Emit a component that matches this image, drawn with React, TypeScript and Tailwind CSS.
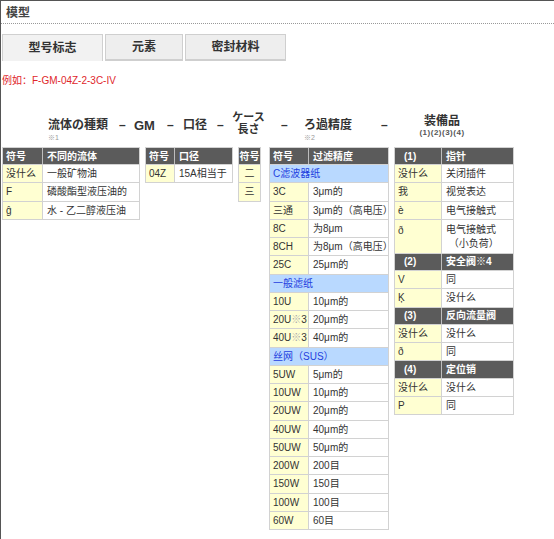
import React from 'react'

type Row = {
    k: string
    v?: string
    kind?: 'head' | 'section' | 'row'
    tall?: boolean
}

const fluid: Row[] = [
    { k: '符号', v: '不同的流体', kind: 'head' },
    { k: '没什么', v: '一般矿物油' },
    { k: 'F', v: '磷酸酯型液压油的' },
    { k: 'ĝ', v: '水 - 乙二醇液压油' },
]

const bore: Row[] = [
    { k: '符号', v: '口径', kind: 'head' },
    { k: '04Z', v: '15A相当于' },
]

const caseLen: Row[] = [
    { k: '符号', kind: 'head' },
    { k: '二' },
    { k: '三' },
]

const filter: Row[] = [
    { k: '符号', v: '过滤精度', kind: 'head' },
    { k: 'C滤波器纸', kind: 'section' },
    { k: '3C', v: '3μm的' },
    { k: '三通', v: '3μm的（高电压）' },
    { k: '8C', v: '为8μm' },
    { k: '8CH', v: '为8μm（高电压）' },
    { k: '25C', v: '25μm的' },
    { k: '一般滤纸', kind: 'section' },
    { k: '10U', v: '10μm的' },
    { k: '20U※3', v: '20μm的' },
    { k: '40U※3', v: '40μm的' },
    { k: '丝网（SUS）', kind: 'section' },
    { k: '5UW', v: '5μm的' },
    { k: '10UW', v: '10μm的' },
    { k: '20UW', v: '20μm的' },
    { k: '40UW', v: '40μm的' },
    { k: '50UW', v: '50μm的' },
    { k: '200W', v: '200目' },
    { k: '150W', v: '150目' },
    { k: '100W', v: '100目' },
    { k: '60W', v: '60目' },
]

const options: Row[] = [
    { k: '(1)', v: '指针', kind: 'head' },
    { k: '没什么', v: '关闭插件' },
    { k: '我', v: '视觉表达' },
    { k: 'è', v: '电气接触式' },
    { k: 'ð', v: '电气接触式\n （小负荷）', tall: true },
    { k: '(2)', v: '安全阀※4', kind: 'head' },
    { k: 'V', v: '同' },
    { k: 'Ķ', v: '没什么' },
    { k: '(3)', v: '反向流量阀', kind: 'head' },
    { k: '没什么', v: '没什么' },
    { k: 'ð', v: '同' },
    { k: '(4)', v: '定位销', kind: 'head' },
    { k: '没什么', v: '没什么' },
    { k: 'P', v: '同' },
]

function SpecTable({ rows, keyW, valW, padHead }: { rows: Row[]; keyW: string; valW?: string; padHead?: string }) {
    return (
        <div className="flex flex-col border border-[#d2d2d2] bg-white">
            {rows.map((r, i) => {
                const top = i > 0 ? 'border-t border-[#d2d2d2]' : ''
                if (r.kind === 'section') {
                    return (
                        <div key={i} className={`h-[18.25px] flex items-center px-[3px] bg-[#b9d9ff] text-[#1f3fe0] whitespace-nowrap ${top}`}>
                            {r.k}
                        </div>
                    )
                }
                if (r.kind === 'head') {
                    return (
                        <div key={i} className={`flex ${i === 0 ? 'h-[16px]' : 'h-[17.25px] border-t border-[#d2d2d2]'} bg-[#5b5b5b] text-white font-bold whitespace-nowrap`}>
                            <div className={`${keyW} shrink-0 flex items-center ${padHead ?? 'pl-[3px]'} ${valW ? 'border-r border-[#bdbdbd]' : ''}`}>
                                {r.k}
                            </div>
                            {valW && <div className={`${valW} flex items-center pl-[4px]`}>{r.v}</div>}
                        </div>
                    )
                }
                return (
                    <div key={i} className={`flex ${r.tall ? 'h-[34px]' : 'h-[18.25px]'} ${top} whitespace-nowrap`}>
                        <div className={`${keyW} shrink-0 flex ${r.tall ? 'items-start pt-[3px]' : 'items-center'} ${valW ? 'pl-[3px] border-r border-[#d2d2d2]' : 'justify-center'} bg-[#ffffd2] text-[#333]`}>
                            {r.k.includes('※') ? (
                                <>
                                    {r.k.split('※')[0]}
                                    <span className="text-[#aaa]">※</span>
                                    {r.k.split('※')[1]}
                                </>
                            ) : (
                                r.k
                            )}
                        </div>
                        {valW && (
                            <div className={`${valW} flex ${r.tall ? 'items-start pt-[3px] leading-[14px]' : 'items-center'} pl-[4px] text-[#333] whitespace-pre`}>
                                {r.v}
                            </div>
                        )}
                    </div>
                )
            })}
        </div>
    )
}

export default function App() {
    return (
        <div className="w-[554px] h-[539px] overflow-hidden bg-white border-t border-l border-[#555] font-['Liberation_Sans','Noto_Sans_CJK_SC',sans-serif] text-[#333]">
            {/* title */}
            <div className="h-[23px] pl-[5px] pt-[5px] text-[12px] leading-[14px] font-bold text-[#444] border-b border-dotted border-[#999]">
                模型
            </div>

            {/* tabs */}
            <div className="mt-[10px] flex gap-[2px] pl-[1px]">
                <div className="w-[101px] h-[27px] flex items-center justify-center bg-[#f2f2f2] border border-[#d0d0d0] border-b-0 text-[12px] font-bold">
                    型号标志
                </div>
                <div className="w-[78px] h-[27px] flex items-center justify-center bg-[#eeeeee] border border-[#cfcfcf] border-b-2 text-[12px] font-bold">
                    元素
                </div>
                <div className="w-[101px] h-[27px] flex items-center justify-center bg-[#eeeeee] border border-[#cfcfcf] border-b-2 text-[12px] font-bold">
                    密封材料
                </div>
            </div>

            <div className="mt-[13px] pl-[1px] text-[10px] leading-[13px] text-[#e0262b]">例如：F-GM-04Z-2-3C-IV</div>

            {/* heading row */}
            <div className="mt-[23px] h-[37px] flex items-start pl-[47px] text-[#333] font-bold whitespace-nowrap">
                <div className="w-[71px] pt-[8px]">
                    <div className="text-[12px] leading-[15px]">流体の種類</div>
                    <div className="text-[7px] leading-[9px] text-[#999] font-normal">※1</div>
                </div>
                <div className="w-[15px] pt-[8px] text-[12px] leading-[15px]">–</div>
                <div className="w-[33px] pt-[8px] text-[13px] leading-[15px]">GM</div>
                <div className="w-[16px] pt-[8px] text-[12px] leading-[15px]">–</div>
                <div className="w-[34px] pt-[8px] text-[12px] leading-[15px]">口径</div>
                <div className="w-[15px] pt-[8px] text-[12px] leading-[15px]">–</div>
                <div className="w-[49px] pt-[1px]">
                    <div className="w-[33px] text-center text-[11px] leading-[12px]">ケース</div>
                    <div className="w-[33px] text-center text-[11px] leading-[12px]">長さ</div>
                </div>
                <div className="w-[23px] pt-[8px] text-[12px] leading-[15px]">–</div>
                <div className="w-[77px] pt-[8px]">
                    <div className="text-[12px] leading-[15px]">ろ過精度</div>
                    <div className="text-[7px] leading-[9px] text-[#999] font-normal">※2</div>
                </div>
                <div className="w-[35px] pt-[8px] text-[12px] leading-[15px]">–</div>
                <div className="w-[52px] pt-[4px] text-center">
                    <div className="text-[12px] leading-[14px]">装備品</div>
                    <div className="text-[8px] leading-[10px] text-[#555] tracking-[0.5px]">(1)(2)(3)(4)</div>
                </div>
            </div>

            {/* tables */}
            <div className="flex items-start pl-[1px] text-[10px]">
                <SpecTable rows={fluid} keyW="w-[40px]" valW="w-[96px]" />
                <div className="ml-[5px]">
                    <SpecTable rows={bore} keyW="w-[29px]" valW="w-[57px]" />
                </div>
                <div className="ml-[5px]">
                    <SpecTable rows={caseLen} keyW="w-[21px]" padHead="justify-center" />
                </div>
                <div className="ml-[8px]">
                    <SpecTable rows={filter} keyW="w-[39px]" valW="w-[79px]" />
                </div>
                <div className="ml-[5px]">
                    <SpecTable rows={options} keyW="w-[47px]" valW="w-[71px]" padHead="pl-[9px]" />
                </div>
            </div>
        </div>
    )
}
